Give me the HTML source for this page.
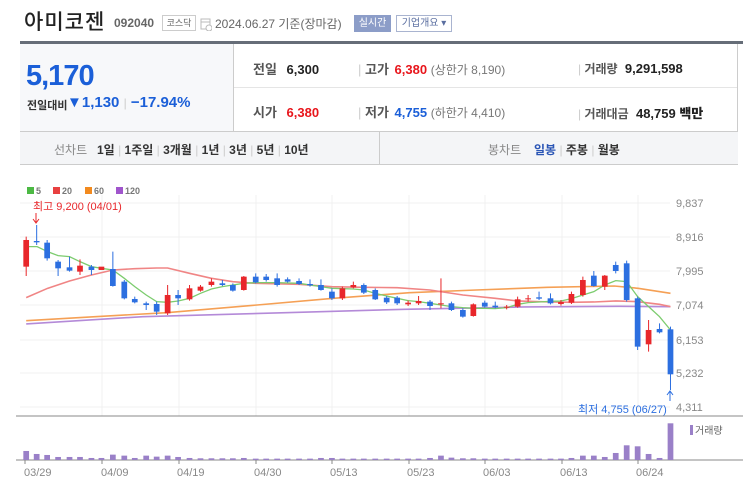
<!DOCTYPE html>
<html><head><meta charset="utf-8"><style>
*{margin:0;padding:0;box-sizing:border-box}
body{width:743px;height:485px;background:#fff;font-family:"Liberation Sans","Noto Sans CJK KR",sans-serif;position:relative;overflow:hidden;color:#333}
.a{position:absolute;white-space:nowrap}
.b{font-weight:bold}
</style></head><body>
<div class="a" style="left:24px;top:6px;font-size:21px;color:#222;font-family:'Noto Sans CJK KR',sans-serif;font-weight:500;letter-spacing:1px">아미코젠</div>
<div class="a b" style="left:114px;top:16px;font-size:12px;color:#666">092040</div>
<div class="a" style="left:162px;top:15px;width:34px;height:16px;border:1px solid #ccc;font-size:9px;color:#666;text-align:center;line-height:14px">코스닥</div>
<svg class="a" style="left:200px;top:17px" width="12" height="14"><rect x="1" y="2" width="9" height="10" fill="none" stroke="#bbb"/><line x1="1" y1="5" x2="10" y2="5" stroke="#bbb"/><circle cx="9" cy="11" r="3" fill="#fff" stroke="#bbb"/></svg>
<div class="a" style="left:215px;top:15px;font-size:12px;color:#666">2024.06.27 기준(장마감)</div>
<div class="a" style="left:354px;top:15px;width:37px;height:17px;background:#8c9dc8;color:#fff;font-size:10px;text-align:center;line-height:17px">실시간</div>
<div class="a" style="left:396px;top:15px;width:56px;height:17px;border:1px solid #a9b4d0;color:#5a6ea0;font-size:10px;text-align:center;line-height:15px">기업개요 ▾</div>
<div class="a" style="left:20px;top:41px;width:723px;height:3px;background:#666d78"></div>
<div class="a" style="left:20px;top:44px;width:718px;height:121px;border-right:1px solid #ccc;border-left:1px solid #ddd"></div>
<div class="a" style="left:20px;top:44px;width:214px;height:87px;background:#f7f8fa;border-right:1px solid #ccc"></div>
<div class="a b" style="left:26px;top:60px;font-size:29px;color:#1b5fd8;letter-spacing:-1px">5,170</div>
<div class="a" style="left:27px;top:97px;font-size:11px;color:#333;font-weight:bold">전일대비</div>
<div class="a b" style="left:67px;top:94px;font-size:15px;color:#1b5fd8">▼1,130 <span style="color:#ccc;font-size:12px;font-weight:normal">|</span> −17.94%</div>
<div class="a" style="left:234px;top:87px;width:503px;height:1px;background:#e5e5e5"></div>
<div class="a" style="left:20px;top:131px;width:718px;height:34px;background:#f4f5f7;border-top:1px solid #ccc;border-bottom:1px solid #ccc"></div>
<div class="a" style="left:379px;top:132px;width:1px;height:32px;background:#ccc"></div>
<div class="a b" style="font-size:13px;left:253px;top:59px;color:#555">전일 <b style="color:#222;margin-left:6px">6,300</b></div>
<div class="a b" style="font-size:13px;left:253px;top:102px;color:#555">시가 <b style="color:#e8151b;margin-left:6px">6,380</b></div>
<div class="a b" style="font-size:13px;left:358px;top:59px;color:#555"><span style="color:#ccc;font-weight:normal">|</span> 고가 <b style="color:#e8151b;margin-left:2px">6,380</b> <span style="color:#777;font-size:12px;font-weight:normal">(상한가 8,190)</span></div>
<div class="a b" style="font-size:13px;left:358px;top:102px;color:#555"><span style="color:#ccc;font-weight:normal">|</span> 저가 <b style="color:#1b5fd8;margin-left:2px">4,755</b> <span style="color:#777;font-size:12px;font-weight:normal">(하한가 4,410)</span></div>
<div class="a b" style="font-size:12px;left:578px;top:60px;color:#555"><span style="color:#ccc;font-weight:normal">|</span> 거래량 <b style="color:#222;font-size:13px;margin-left:4px">9,291,598</b></div>
<div class="a b" style="font-size:12px;left:578px;top:103px;color:#555"><span style="color:#ccc;font-weight:normal">|</span> 거래대금 <b style="color:#222;font-size:13px;margin-left:4px">48,759 백만</b></div>
<div class="a" style="font-size:12px;left:54px;top:141px;color:#888">선차트</div>
<div class="a b" style="font-size:12px;left:97px;top:141px;color:#333">1일 <span style="color:#ccc;font-weight:normal">|</span> 1주일 <span style="color:#ccc;font-weight:normal">|</span> 3개월 <span style="color:#ccc;font-weight:normal">|</span> 1년 <span style="color:#ccc;font-weight:normal">|</span> 3년 <span style="color:#ccc;font-weight:normal">|</span> 5년 <span style="color:#ccc;font-weight:normal">|</span> 10년</div>
<div class="a" style="font-size:12px;left:488px;top:141px;color:#888">봉차트</div>
<div class="a b" style="font-size:12px;left:534px;top:141px;color:#333"><span style="color:#2a55b5">일봉</span> <span style="color:#ccc;font-weight:normal">|</span> 주봉 <span style="color:#ccc;font-weight:normal">|</span> 월봉</div>

<svg class="a" style="left:0;top:170px" width="743" height="315">
<g font-size="9" font-weight="bold" fill="#777">
<rect x="27" y="17" width="7" height="7" fill="#4cb944"/><text x="36" y="24">5</text>
<rect x="53" y="17" width="7" height="7" fill="#e84040"/><text x="62" y="24">20</text>
<rect x="85" y="17" width="7" height="7" fill="#f28a1e"/><text x="94" y="24">60</text>
<rect x="116" y="17" width="7" height="7" fill="#a055cc"/><text x="125" y="24">120</text>
</g>
<g stroke="#f0f0f0" stroke-width="1">
<line x1="20" y1="33" x2="670" y2="33"/><line x1="20" y1="67" x2="670" y2="67"/><line x1="20" y1="101" x2="670" y2="101"/><line x1="20" y1="135" x2="670" y2="135"/><line x1="20" y1="170" x2="670" y2="170"/><line x1="20" y1="203" x2="670" y2="203"/><line x1="20" y1="237" x2="670" y2="237"/>
<line x1="102" y1="25" x2="102" y2="246"/><line x1="179" y1="25" x2="179" y2="246"/><line x1="256" y1="25" x2="256" y2="246"/><line x1="332" y1="25" x2="332" y2="246"/><line x1="409" y1="25" x2="409" y2="246"/><line x1="485" y1="25" x2="485" y2="246"/><line x1="562" y1="25" x2="562" y2="246"/><line x1="638" y1="25" x2="638" y2="246"/>
</g>
<g font-size="11" fill="#888" font-family="Liberation Sans,sans-serif">
<text x="676" y="37">9,837</text><text x="676" y="71">8,916</text><text x="676" y="105">7,995</text><text x="676" y="139">7,074</text><text x="676" y="174">6,153</text><text x="676" y="207">5,232</text><text x="676" y="241">4,311</text>
</g>
<text x="33" y="40" font-size="11" fill="#e8272b">최고 9,200 (04/01)</text>
<path d="M36 43 V52 M33 49 L36 53 L39 49" stroke="#e8272b" fill="none"/>
<text x="578" y="243" font-size="11" fill="#2c6fe0">최저 4,755 (06/27)</text>
<path d="M670 231 V221 M667 225 L670 221 L673 225" stroke="#2c6fe0" fill="none"/>
<line x1="16" y1="246" x2="743" y2="246" stroke="#888"/>
<line x1="16" y1="290" x2="743" y2="290" stroke="#888"/>
<g transform="scale(0.4762,0.3333)">
<g fill="none" stroke-width="1.3" vector-effect="non-scaling-stroke">
<polyline vector-effect="non-scaling-stroke" stroke="#b48ad8" stroke-width="1.6" points="55,462 300,440 600,428 850,418 1100,411 1300,409 1408,410"/>
<polyline vector-effect="non-scaling-stroke" stroke="#f5a055" stroke-width="1.6" points="55,452 200,440 350,428 540,405 700,385 860,368 1000,360 1150,352 1290,348 1340,355 1408,370"/>
<polyline vector-effect="non-scaling-stroke" stroke="#f08585" stroke-width="1.6" points="55,383 100,355 146,333 192,315 237,300 283,296 329,294 352,294 398,310 444,325 489,335 537,340 628,343 697,350 764,352 834,353 903,360 972,375 1040,385 1087,393 1132,395 1200,397 1247,396 1293,393 1339,395 1385,403 1408,410"/>
<polyline vector-effect="non-scaling-stroke" stroke="#7ccc6e" stroke-width="1.3" points="55,230 78,230 100,245 122,257 146,260 168,275 192,290 213,295 237,300 261,325 283,350 307,375 329,395 352,397 374,393 398,385 421,370 444,357 467,350 489,345 512,340 537,338 582,338 628,340 674,350 697,355 742,357 764,360 788,370 812,378 834,385 857,392 879,395 903,400 926,405 948,410 972,413 994,415 1018,415 1040,416 1064,413 1087,403 1109,398 1132,396 1156,394 1178,393 1200,386 1224,375 1247,365 1270,345 1293,332 1316,335 1339,380 1362,410 1385,440 1408,480"/>
</g>
<g stroke-width="1" vector-effect="non-scaling-stroke">
<path vector-effect="non-scaling-stroke" stroke="#e8272b" d="M55 200V318M168 268V315M352 345V435M398 345V392M421 345V365M444 325V350M512 318V362M719 350V390M742 335V355M857 392V408M879 378V405M926 325V415M994 400V440M1064 405V418M1087 380V413M1109 375V395M1178 390V407M1200 365V402M1224 320V380M1270 315V360M1362 450V545"/>
<path vector-effect="non-scaling-stroke" stroke="#2c6fe0" d="M77 165V225M99 210V272M122 270V318M146 260V305M192 285V315M237 245V350M261 330V388M283 380V400M307 395V420M329 395V435M374 360V405M467 330V348M489 340V365M537 310V340M559 312V335M582 310V350M604 322V338M628 325V345M651 328V350M674 328V362M697 355V390M764 340V372M788 355V390M812 378V402M834 378V405M903 390V420M948 395V423M972 415V443M1018 392V413M1040 395V415M1132 365V390M1156 370V403M1247 303V350M1293 275V310M1316 272V395M1339 380V540M1385 460V490M1408 470V660"/>
</g>
<g fill="#e8272b">
<rect x="49" y="210" width="12" height="80"/><rect x="162" y="287" width="12" height="18"/><rect x="207" y="290" width="12" height="10"/><rect x="346" y="375" width="12" height="55"/><rect x="392" y="355" width="12" height="33"/><rect x="415" y="350" width="12" height="12"/><rect x="438" y="335" width="12" height="10"/><rect x="506" y="320" width="12" height="40"/><rect x="713" y="355" width="12" height="30"/><rect x="736" y="345" width="12" height="7"/><rect x="851" y="398" width="12" height="5"/><rect x="873" y="393" width="12" height="7"/><rect x="920" y="400" width="12" height="3"/><rect x="988" y="403" width="12" height="35"/><rect x="1058" y="410" width="12" height="3"/><rect x="1081" y="388" width="12" height="22"/><rect x="1103" y="385" width="12" height="3"/><rect x="1172" y="396" width="12" height="6"/><rect x="1194" y="372" width="12" height="26"/><rect x="1218" y="330" width="12" height="45"/><rect x="1264" y="317" width="12" height="33"/><rect x="1356" y="480" width="12" height="43"/>
</g>
<g fill="#2c6fe0">
<rect x="71" y="213" width="12" height="4"/><rect x="93" y="218" width="12" height="47"/><rect x="116" y="275" width="12" height="20"/><rect x="140" y="292" width="12" height="10"/><rect x="186" y="290" width="12" height="10"/><rect x="231" y="297" width="12" height="51"/><rect x="255" y="335" width="12" height="50"/><rect x="277" y="387" width="12" height="10"/><rect x="301" y="400" width="12" height="5"/><rect x="323" y="402" width="12" height="23"/><rect x="368" y="375" width="12" height="10"/><rect x="461" y="340" width="12" height="5"/><rect x="483" y="345" width="12" height="17"/><rect x="531" y="320" width="12" height="17"/><rect x="553" y="320" width="12" height="10"/><rect x="576" y="325" width="12" height="20"/><rect x="598" y="328" width="12" height="7"/><rect x="622" y="333" width="12" height="9"/><rect x="645" y="342" width="12" height="4"/><rect x="668" y="345" width="12" height="15"/><rect x="691" y="365" width="12" height="20"/><rect x="758" y="345" width="12" height="23"/><rect x="782" y="360" width="12" height="28"/><rect x="806" y="383" width="12" height="14"/><rect x="828" y="383" width="12" height="17"/><rect x="897" y="395" width="12" height="13"/><rect x="942" y="400" width="12" height="20"/><rect x="966" y="420" width="12" height="20"/><rect x="1012" y="398" width="12" height="12"/><rect x="1034" y="407" width="12" height="5"/><rect x="1126" y="382" width="12" height="4"/><rect x="1150" y="385" width="12" height="15"/><rect x="1241" y="317" width="12" height="31"/><rect x="1287" y="285" width="12" height="18"/><rect x="1310" y="280" width="12" height="110"/><rect x="1333" y="385" width="12" height="145"/><rect x="1379" y="477" width="12" height="10"/><rect x="1402" y="478" width="12" height="135"/>
</g>
<g fill="#9a80c8">
<rect x="49" y="843" width="12" height="27"/><rect x="71" y="852" width="12" height="18"/><rect x="93" y="855" width="12" height="15"/><rect x="116" y="861" width="12" height="9"/><rect x="140" y="861" width="12" height="9"/><rect x="162" y="861" width="12" height="9"/><rect x="186" y="864" width="12" height="6"/><rect x="207" y="864" width="12" height="6"/><rect x="231" y="854" width="12" height="16"/><rect x="255" y="857" width="12" height="13"/><rect x="277" y="864" width="12" height="6"/><rect x="301" y="857" width="12" height="13"/><rect x="323" y="860" width="12" height="10"/><rect x="346" y="857" width="12" height="13"/><rect x="368" y="861" width="12" height="9"/><rect x="392" y="864" width="12" height="6"/><rect x="415" y="865" width="12" height="5"/><rect x="438" y="865" width="12" height="5"/><rect x="461" y="865" width="12" height="5"/><rect x="483" y="865" width="12" height="5"/><rect x="506" y="864" width="12" height="6"/><rect x="531" y="866" width="12" height="4"/><rect x="553" y="866" width="12" height="4"/><rect x="576" y="866" width="12" height="4"/><rect x="598" y="866" width="12" height="4"/><rect x="622" y="866" width="12" height="4"/><rect x="645" y="866" width="12" height="4"/><rect x="668" y="864" width="12" height="6"/><rect x="691" y="864" width="12" height="6"/><rect x="713" y="866" width="12" height="4"/><rect x="736" y="866" width="12" height="4"/><rect x="758" y="866" width="12" height="4"/><rect x="782" y="866" width="12" height="4"/><rect x="806" y="866" width="12" height="4"/><rect x="828" y="866" width="12" height="4"/><rect x="851" y="866" width="12" height="4"/><rect x="873" y="866" width="12" height="4"/><rect x="897" y="864" width="12" height="6"/><rect x="920" y="857" width="12" height="13"/><rect x="942" y="863" width="12" height="7"/><rect x="966" y="865" width="12" height="5"/><rect x="988" y="865" width="12" height="5"/><rect x="1012" y="866" width="12" height="4"/><rect x="1034" y="866" width="12" height="4"/><rect x="1058" y="866" width="12" height="4"/><rect x="1081" y="866" width="12" height="4"/><rect x="1103" y="866" width="12" height="4"/><rect x="1126" y="866" width="12" height="4"/><rect x="1150" y="866" width="12" height="4"/><rect x="1172" y="866" width="12" height="4"/><rect x="1194" y="864" width="12" height="6"/><rect x="1218" y="857" width="12" height="13"/><rect x="1241" y="857" width="12" height="13"/><rect x="1264" y="861" width="12" height="9"/><rect x="1287" y="849" width="12" height="21"/><rect x="1310" y="826" width="12" height="44"/><rect x="1333" y="829" width="12" height="41"/><rect x="1356" y="852" width="12" height="18"/><rect x="1379" y="864" width="12" height="6"/><rect x="1402" y="760" width="12" height="110"/>
</g>
</g>
<rect x="690" y="255" width="3" height="10" fill="#9a80c8"/>
<text x="695" y="264" font-size="10" fill="#666">거래량</text>
<g stroke="#888"><line x1="25" y1="290" x2="25" y2="294"/><line x1="102" y1="290" x2="102" y2="294"/><line x1="179" y1="290" x2="179" y2="294"/><line x1="256" y1="290" x2="256" y2="294"/><line x1="332" y1="290" x2="332" y2="294"/><line x1="409" y1="290" x2="409" y2="294"/><line x1="485" y1="290" x2="485" y2="294"/><line x1="562" y1="290" x2="562" y2="294"/><line x1="638" y1="290" x2="638" y2="294"/></g>
<g font-size="11" fill="#888">
<text x="24" y="306">03/29</text><text x="101" y="306">04/09</text><text x="177" y="306">04/19</text><text x="254" y="306">04/30</text><text x="330" y="306">05/13</text><text x="407" y="306">05/23</text><text x="483" y="306">06/03</text><text x="560" y="306">06/13</text><text x="636" y="306">06/24</text>
</g>
</svg>
</body></html>
